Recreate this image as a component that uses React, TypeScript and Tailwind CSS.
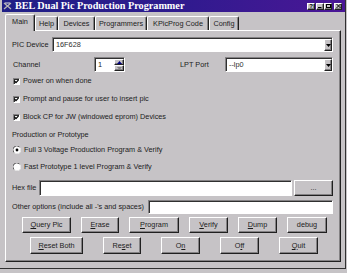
import React from 'react'

const raised =
  'border border-t-white border-l-white border-r-[#202020] border-b-[#202020] shadow-[inset_-1px_-1px_0_#848284]'
const sunken =
  'border border-t-[#848284] border-l-[#848284] border-r-white border-b-white shadow-[inset_1px_1px_0_#303030] bg-white'

function TitleButton({ children }: { children: React.ReactNode }) {
  return (
    <div className={`w-[8px] h-[7px] bg-[#c6c3c6] flex items-center justify-center ${raised}`}>
      {children}
    </div>
  )
}

function TitleBar() {
  return (
    <div className="h-[12px] flex items-center bg-gradient-to-r from-[#1f1f86] via-[#2e1a8e] to-[#4a1696] text-white">
      <svg width="9" height="8" viewBox="0 0 9 8" className="ml-[1px]">
        <path d="M1 1 L8 7 M8 1 L1 7" stroke="#b8b8b8" strokeWidth="1.3" />
        <path d="M2 1 L7 1" stroke="#e0e0e0" strokeWidth="1" />
      </svg>
      <span className="ml-[3px] font-['Liberation_Serif',serif] font-bold text-[10.2px] leading-none">
        BEL Dual Pic Production Programmer
      </span>
      <div className="ml-auto mr-[3px] flex items-center">
        <TitleButton>
          <span className="text-[6px] font-bold text-black leading-none">?</span>
        </TitleButton>
        <div className="ml-[1px]" />
        <TitleButton>
          <svg width="4" height="4" viewBox="0 0 4 4">
            <path d="M0 3.5 H3.5" stroke="#000" strokeWidth="1" />
          </svg>
        </TitleButton>
        <TitleButton>
          <svg width="5" height="4" viewBox="0 0 5 4">
            <rect x="0.5" y="0.5" width="4" height="3" fill="none" stroke="#000" strokeWidth="1" />
          </svg>
        </TitleButton>
        <div className="ml-[2px]" />
        <TitleButton>
          <svg width="5" height="4" viewBox="0 0 5 4">
            <path d="M0.5 0 L4.5 4 M4.5 0 L0.5 4" stroke="#000" strokeWidth="1" />
          </svg>
        </TitleButton>
      </div>
    </div>
  )
}

const tabs = [
  { label: 'Main', w: 'w-[30px]' },
  { label: 'Help', w: 'w-[23px]' },
  { label: 'Devices', w: 'w-[37px]' },
  { label: 'Programmers', w: 'w-[52px]' },
  { label: 'KPicProg Code', w: 'w-[62px]' },
  { label: 'Config', w: 'w-[30px]' },
]

function Tabs() {
  return (
    <div className="h-[16px] mt-[2px] ml-[3px] flex items-end">
      {tabs.map((t, i) => (
        <div
          key={t.label}
          className={`${t.w} ${
            i === 0 ? 'h-[17px] -mb-[1px] relative z-10 pb-[2px]' : 'h-[14px]'
          } bg-[#c6c3c6] rounded-t-[2px] border-t border-l border-r border-t-white border-l-white border-r-[#202020] shadow-[inset_-1px_0_0_#848284] flex items-center justify-center leading-none`}
        >
          {t.label}
        </div>
      ))}
    </div>
  )
}

function DropArrow() {
  return (
    <svg width="5" height="3" viewBox="0 0 5 3">
      <path d="M0 0 H5 L2.5 3 Z" fill="#000" />
    </svg>
  )
}

function Combo({ value, w }: { value: string; w: string }) {
  return (
    <div className={`${w} h-[15px] ${sunken} flex items-stretch`}>
      <span className="flex-1 flex items-center pl-[3px] text-[#303030] leading-none">{value}</span>
      <div className={`w-[8px] bg-[#c6c3c6] flex items-center justify-center ${raised} mt-[1px]`}>
        <DropArrow />
      </div>
    </div>
  )
}

function Spinner() {
  return (
    <div className={`w-[31px] h-[15px] ${sunken} flex items-stretch`}>
      <span className="flex-1 flex items-center pl-[3px] leading-none">1</span>
      <div className="w-[10px] flex flex-col mt-[1px]">
        <div className={`flex-1 bg-[#c6c3c6] flex items-center justify-center ${raised}`}>
          <svg width="5" height="3" viewBox="0 0 5 3">
            <path d="M0 3 H5 L2.5 0 Z" fill="#000080" />
          </svg>
        </div>
        <div className={`flex-1 bg-[#c6c3c6] flex items-center justify-center ${raised}`}>
          <svg width="5" height="3" viewBox="0 0 5 3">
            <path d="M0 0 H5 L2.5 3 Z" fill="#848284" />
          </svg>
        </div>
      </div>
    </div>
  )
}

function Check({ label, mt }: { label: string; mt: string }) {
  return (
    <div className={`h-[12px] ${mt} ml-[7px] flex items-center`}>
      <div className={`w-[7px] h-[7px] ${sunken} flex items-center justify-center`}>
        <svg width="5" height="5" viewBox="0 0 5 5">
          <path d="M0.5 2 L2 3.6 L4.6 0.8" stroke="#000" strokeWidth="1.2" fill="none" />
        </svg>
      </div>
      <span className="ml-[3px] leading-none">{label}</span>
    </div>
  )
}

function Radio({ label, on, mt }: { label: string; on?: boolean; mt: string }) {
  return (
    <div className={`h-[12px] ${mt} ml-[7px] flex items-center`}>
      <svg width="8" height="8" viewBox="0 0 8 8">
        <circle cx="4" cy="4" r="3.5" fill="#fff" />
        <path d="M1 6.5 A3.5 3.5 0 0 1 6.5 1" stroke="#606060" strokeWidth="1" fill="none" />
        <path d="M6.8 1.5 A3.5 3.5 0 0 1 1.5 6.8" stroke="#e8e8e8" strokeWidth="1" fill="none" />
        {on && <circle cx="4" cy="4" r="1.4" fill="#000" />}
      </svg>
      <span className="ml-[3px] leading-none">{label}</span>
    </div>
  )
}

function Btn({ w, h, children }: { w: string; h: string; children: React.ReactNode }) {
  return (
    <div className={`${w} ${h} bg-[#c6c3c6] ${raised} flex items-center justify-center leading-none`}>
      <span>{children}</span>
    </div>
  )
}

function Panel() {
  return (
    <div className="ml-[3px] w-[336px] h-[232px] border border-t-white border-l-white border-r-[#202020] border-b-[#202020] shadow-[inset_-1px_-1px_0_#848284] flex flex-col">
      <div className="h-[15px] mt-[6px] flex items-center">
        <span className="ml-[6px] w-[40px] leading-none">PIC Device</span>
        <Combo value="16F628" w="w-[281px]" />
      </div>
      <div className="h-[15px] mt-[5px] flex items-center">
        <span className="ml-[7px] w-[81px] leading-none">Channel</span>
        <Spinner />
        <span className="ml-[55px] w-[45px] leading-none">LPT Port</span>
        <Combo value="--lp0" w="w-[108px]" />
      </div>
      <Check label="Power on when done" mt="mt-[3px]" />
      <Check label="Prompt and pause for user to insert pic" mt="mt-[6px]" />
      <Check label="Block CP for JW (windowed eprom) Devices" mt="mt-[6px]" />
      <div className="h-[12px] mt-[6px] ml-[6px] flex items-center leading-none">Production or Prototype</div>
      <Radio label="Full 3 Voltage Production Program & Verify" on mt="mt-[3px]" />
      <Radio label="Fast Prototype 1 level Program & Verify" mt="mt-[5px]" />
      <div className="h-[16px] mt-[7px] flex items-center">
        <span className="ml-[6px] w-[27px] leading-none">Hex file</span>
        <div className={`w-[253px] h-[16px] ${sunken}`} />
        <div className="ml-[2px]">
          <Btn w="w-[39px]" h="h-[16px]">...</Btn>
        </div>
      </div>
      <div className="h-[14px] mt-[4px] flex items-center">
        <span className="ml-[6px] w-[136px] leading-none">Other options (include all -'s and spaces)</span>
        <div className={`w-[185px] h-[14px] ${sunken}`} />
      </div>
      <div className="mt-[3px] ml-[16px] flex gap-[10px]">
        <Btn w="w-[49px]" h="h-[16px]"><u>Q</u>uery Pic</Btn>
        <Btn w="w-[38px]" h="h-[16px]"><u>E</u>rase</Btn>
        <Btn w="w-[50px]" h="h-[16px]"><u>P</u>rogram</Btn>
        <Btn w="w-[39px]" h="h-[16px]"><u>V</u>erify</Btn>
        <Btn w="w-[39px]" h="h-[16px]"><u>D</u>ump</Btn>
        <Btn w="w-[40px]" h="h-[16px]">debug</Btn>
      </div>
      <div className="mt-[4px] ml-[24px] flex gap-[20px]">
        <Btn w="w-[53px]" h="h-[17px]"><u>R</u>eset Both</Btn>
        <Btn w="w-[38px]" h="h-[17px]">Re<u>s</u>et</Btn>
        <Btn w="w-[39px]" h="h-[17px]">O<u>n</u></Btn>
        <Btn w="w-[39px]" h="h-[17px]">O<u>f</u>f</Btn>
        <Btn w="w-[39px]" h="h-[17px]"><u>Q</u>uit</Btn>
      </div>
    </div>
  )
}

export default function App() {
  return (
    <div className="w-[347px] h-[273px] overflow-hidden bg-[#c6c3c6] font-['Liberation_Sans',Arial,sans-serif] text-[7.3px] text-[#1c1c1c]">
      <div className="w-[346px] h-[269px] flex flex-col pl-[2px] border-r border-b border-r-[#303030] border-b-[#303030]">
        <TitleBar />
        <Tabs />
        <Panel />
      </div>
    </div>
  )
}
